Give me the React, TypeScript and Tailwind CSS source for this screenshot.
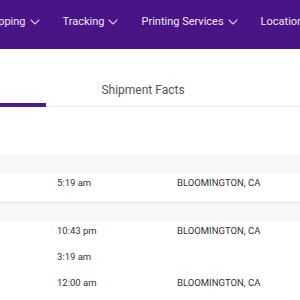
import { ChevronDown } from "lucide-react";

const navItems = ["Shipping", "Tracking", "Printing Services", "Locations"];

type Row = { time: string; location: string };

const groups: { date: string; rows: Row[] }[] = [
  { date: "Friday, 3/14/2025", rows: [{ time: "5:19 am", location: "BLOOMINGTON, CA" }] },
  {
    date: "Thursday, 3/13/2025",
    rows: [
      { time: "10:43 pm", location: "BLOOMINGTON, CA" },
      { time: "3:19 am", location: "" },
      { time: "12:00 am", location: "BLOOMINGTON, CA" },
    ],
  },
];

export default function App() {
  return (
    <div className="w-[300px] h-[300px] overflow-hidden bg-white font-['Roboto',sans-serif]">
      {/* Top nav */}
      <div className="h-[49px] bg-[#4a1486] flex items-center pb-[5px] whitespace-nowrap -ml-[17px]">
        {navItems.map((item) => (
          <div key={item} className="flex items-center text-[11px] text-[#ece8f3] mr-[20px] shrink-0">
            <span>{item}</span>
            <ChevronDown className="w-[16px] h-[16px] ml-[1px] text-[#d6cde6]" strokeWidth={1.6} />
          </div>
        ))}
      </div>

      {/* Tabs */}
      <div className="flex h-[58px] border-b border-[#e6e6e6] whitespace-nowrap -ml-[144px]">
        <div className="w-[190px] shrink-0 flex items-end justify-center pb-[6px] -mb-px border-b-[4px] border-[#4b1a96] text-[12px] text-[#4b1a96]">
          Travel History
        </div>
        <div className="w-[190px] shrink-0 flex items-end justify-center pb-[7px] pl-[4px] text-[12px] text-[#555]">
          Shipment Facts
        </div>
      </div>

      {/* Travel history table */}
      <div className="mt-[48px] text-[9.5px] leading-[12px] text-[#333]">
        {groups.map((g, gi) => (
          <div key={g.date} className={gi > 0 ? "border-t border-[#e3e3e3]" : "h-[47px]"}>
            <div className="h-[18px] bg-[#f7f7f7]"></div>
            {g.rows.map((r) => (
              <div key={r.time} className="flex h-[26px] pt-[4px]">
                <span className="w-[177px] pl-[57px] shrink-0">{r.time}</span>
                <span>{r.location}</span>
              </div>
            ))}
          </div>
        ))}
      </div>
    </div>
  );
}
